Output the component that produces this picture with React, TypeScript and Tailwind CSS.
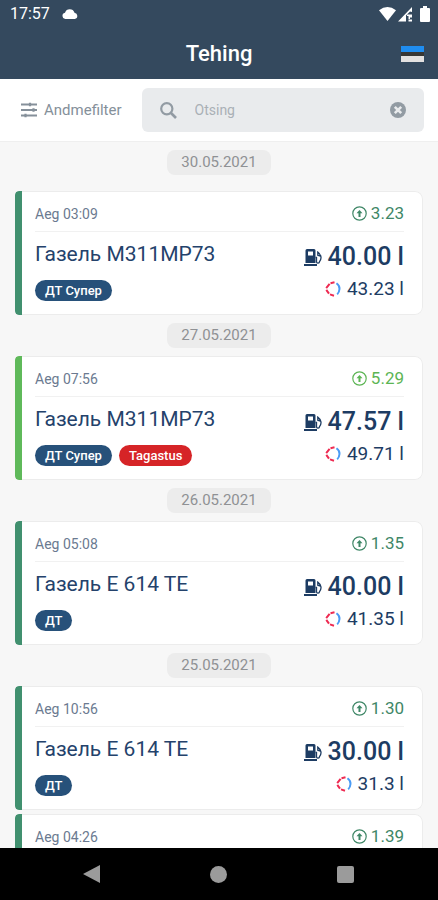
import { useState } from "react";

type Tone = "dark" | "light";

type Transaction = {
  time: string;
  price: string;
  tone: Tone;
  details?: {
    vehicle: string;
    volume: string;
    total: string;
    fuel: string;
    refund?: boolean;
  };
};

type DayGroup = {
  date: string;
  items: Transaction[];
};

const DAYS: DayGroup[] = [
  {
    date: "30.05.2021",
    items: [
      {
        time: "03:09",
        price: "3.23",
        tone: "dark",
        details: { vehicle: "Газель M311MP73", volume: "40.00", total: "43.23", fuel: "ДТ Супер" },
      },
    ],
  },
  {
    date: "27.05.2021",
    items: [
      {
        time: "07:56",
        price: "5.29",
        tone: "light",
        details: { vehicle: "Газель M311MP73", volume: "47.57", total: "49.71", fuel: "ДТ Супер", refund: true },
      },
    ],
  },
  {
    date: "26.05.2021",
    items: [
      {
        time: "05:08",
        price: "1.35",
        tone: "dark",
        details: { vehicle: "Газель E 614 TE", volume: "40.00", total: "41.35", fuel: "ДТ" },
      },
    ],
  },
  {
    date: "25.05.2021",
    items: [
      {
        time: "10:56",
        price: "1.30",
        tone: "dark",
        details: { vehicle: "Газель E 614 TE", volume: "30.00", total: "31.3", fuel: "ДТ" },
      },
      { time: "04:26", price: "1.39", tone: "dark" },
    ],
  },
];

const BAR_TONE: Record<Tone, string> = {
  dark: "bg-[#41906f]",
  light: "bg-[#5fb95a]",
};

const TEXT_TONE: Record<Tone, string> = {
  dark: "text-[#3f8767]",
  light: "text-[#5cb554]",
};

function StatusBar() {
  return (
    <div className="flex h-7 items-center justify-between pl-[10px] pr-2 text-white">
      <div className="flex items-center gap-3">
        <span className="text-base">17:57</span>
        <svg className="h-[10px] w-4" viewBox="0 0 16 10" fill="currentColor" aria-hidden="true">
          <path d="M3.2 10A3.200 3.200 0 0 1 3 3.700 5 5 0 0 1 12.500 3.700 3.200 3.200 0 0 1 12.800 10Z" />
        </svg>
      </div>
      <div className="flex items-center">
        <svg className="h-[14px] w-[17px]" viewBox="0 0 17 14" fill="currentColor" aria-hidden="true">
          <path d="M0 3.200Q8.500-3 17 3.200L8.500 14Z" />
        </svg>
        <svg className="ml-[2px] h-4 w-[15px]" viewBox="0 0 15 16" fill="currentColor" aria-hidden="true">
          <path d="M0 15.500 14 1v5l-2-.5L8 9.500v6z" />
          <path d="M9 8.500h5v3h-2v1.500h-1.500v-3H9zM10.500 13.500H14v2h-3.500z" />
        </svg>
        <svg className="ml-[7px] h-4 w-[10px]" viewBox="0 0 10 16" fill="currentColor" aria-hidden="true">
          <path d="M3 0h4v2h2a1 1 0 0 1 1 1v12a1 1 0 0 1-1 1H1a1 1 0 0 1-1-1V3a1 1 0 0 1 1-1h2z" />
        </svg>
      </div>
    </div>
  );
}

function FilterIcon() {
  return (
    <svg className="h-4 w-4" viewBox="0 0 16 16" fill="none" stroke="currentColor" aria-hidden="true">
      <path d="M0 2.500h16M0 8h16M0 13.500h16" strokeWidth="1.800" />
      <path d="M9 .8v3.400M12.500 6.300v3.400M4.500 11.800v3.400" strokeWidth="2.200" />
    </svg>
  );
}

function SearchIcon() {
  return (
    <svg className="h-[17px] w-[17px] shrink-0" viewBox="0 0 17 17" fill="none" stroke="currentColor" aria-hidden="true">
      <circle cx="6.800" cy="6.800" r="5.600" strokeWidth="2.200" />
      <path d="m11 11 5 5" strokeWidth="2.600" />
    </svg>
  );
}

function ClearIcon() {
  return (
    <svg className="h-4 w-4" viewBox="0 0 16 16" aria-hidden="true">
      <circle cx="8" cy="8" r="8" fill="currentColor" />
      <path d="m4.800 4.800 6.400 6.400M11.200 4.800l-6.400 6.400" stroke="#e9ebed" strokeWidth="2.600" />
    </svg>
  );
}

function PriceIcon() {
  return (
    <svg className="h-[15px] w-[15px]" viewBox="0 0 15 15" fill="none" stroke="currentColor" aria-hidden="true">
      <circle cx="7.500" cy="7.500" r="6.700" strokeWidth="1.200" />
      <path d="M7.500 11V6" strokeWidth="2" />
      <path d="M4.500 7.300 7.500 4l3 3.300z" fill="currentColor" stroke="none" />
    </svg>
  );
}

function PumpIcon() {
  return (
    <svg className="h-[18px] w-[18px]" viewBox="0 0 18 18" aria-hidden="true">
      <path
        fill="currentColor"
        fillRule="evenodd"
        d="M3 1h7a1.500 1.500 0 0 1 1.500 1.500V15h-10V2.500A1.500 1.500 0 0 1 3 1Zm1 2.500v4h5v-4Z"
      />
      <path d="M0 16h13v2H0z" fill="currentColor" />
      <path
        d="M11.500 9.500h1v4a1.500 1.500 0 0 0 3 .2c2.300-3 2.300-6.700-2.300-10.200M13.800 4.500v2.700l2.700 1"
        fill="none"
        stroke="currentColor"
        strokeWidth="1.300"
      />
    </svg>
  );
}

function TotalIcon() {
  return (
    <svg className="h-4 w-4" viewBox="0 0 16 16" fill="none" aria-hidden="true">
      <path d="M9.500 1.300 5.500 2.200M4.600 2.900 1.200 7.200M1.300 8.800l2.700 3.800M5 13.400l4 1.300" stroke="#ee2b52" strokeWidth="2" />
      <path d="M11.500 2.300q3.300 2.300 3 5.700t-2.300 5.400" stroke="#4a9bf5" strokeWidth="2" />
    </svg>
  );
}

function TransactionCard({ item }: { item: Transaction }) {
  const { details } = item;

  return (
    <article className="flex h-[124px] overflow-hidden rounded-l-sm rounded-r-lg">
      <div className={`w-[7px] shrink-0 rounded-l-sm ${BAR_TONE[item.tone]}`} />
      <div className="flex-1 rounded-r-lg border border-l-0 border-[#ececec] bg-white pl-[13px] pr-[18px]">
        <div className="flex h-10 items-center justify-between border-b border-[#f1f1f1] pt-1">
          <span className="text-sm text-[#6b7a90]">Aeg {item.time}</span>
          <span className={`flex items-center gap-1 text-[17px] ${TEXT_TONE[item.tone]}`}>
            <PriceIcon />
            {item.price}
          </span>
        </div>
        {details && (
          <div className="flex justify-between pt-2">
            <div>
              <h2 className="text-[21px] leading-7 text-[#24426b]">{details.vehicle}</h2>
              <div className="mt-3 flex gap-[7px] text-[13px] font-medium leading-[21px] text-white">
                <span className="rounded-full bg-[#27517a] px-[10px]">{details.fuel}</span>
                {details.refund && <span className="rounded-full bg-[#d62427] px-[10px]">Tagastus</span>}
              </div>
            </div>
            <div className="flex flex-col items-end text-[#1d3c63]">
              <p className="flex items-center gap-[6px] text-[25px] font-medium leading-[33px]">
                <PumpIcon />
                {details.volume} l
              </p>
              <p className="flex items-center gap-[6px] text-[19px] leading-8">
                <TotalIcon />
                {details.total} l
              </p>
            </div>
          </div>
        )}
      </div>
    </article>
  );
}

function NavBar() {
  return (
    <nav className="grid h-[52px] shrink-0 grid-cols-3 items-center bg-black px-[29px] text-[#9b9b9b]">
      <button type="button" aria-label="Back" className="justify-self-center">
        <svg className="h-[18px] w-[18px]" viewBox="0 0 18 18" fill="currentColor">
          <path d="M0 9 17 0v18z" />
        </svg>
      </button>
      <button type="button" aria-label="Home" className="h-[17px] w-[17px] justify-self-center rounded-full bg-current" />
      <button type="button" aria-label="Recent apps" className="h-[17px] w-[17px] justify-self-center rounded-xs bg-current" />
    </nav>
  );
}

export default function App() {
  const [query, setQuery] = useState("");

  return (
    <div className="flex h-screen flex-col overflow-hidden bg-[#f7f7f7] font-[Roboto,sans-serif]">
      <header className="shrink-0 bg-[#34495e]">
        <StatusBar />
        <div className="grid h-[51px] grid-cols-[1fr_auto_1fr] items-center px-[14px]">
          <h1 className="col-start-2 text-[22px] font-medium text-white">Tehing</h1>
          <button type="button" aria-label="Eesti" className="flex h-4 w-[23px] flex-col justify-self-end">
            <span className="h-[6px] w-full bg-[#1f8df0]" />
            <span className="h-1 w-full bg-[#383734]" />
            <span className="h-[6px] w-full bg-[#e3e1e0]" />
          </button>
        </div>
      </header>

      <div className="flex h-[63px] shrink-0 items-center gap-5 border-b border-[#efefef] bg-white pl-[21px] pr-[14px]">
        <button type="button" className="flex items-center gap-[7px] text-[15px] text-[#85909a]">
          <FilterIcon />
          Andmefilter
        </button>
        <div className="flex h-11 min-w-0 flex-1 items-center rounded-md bg-[#e9ebed] px-[18px] text-[#929ba3]">
          <SearchIcon />
          <input
            type="text"
            aria-label="Otsing"
            placeholder="Otsing"
            value={query}
            onChange={(e) => setQuery(e.target.value)}
            className="ml-[18px] min-w-0 flex-1 bg-transparent text-sm outline-none placeholder:text-[#a9b0b6]"
          />
          <button type="button" aria-label="Clear" onClick={() => setQuery("")}>
            <ClearIcon />
          </button>
        </div>
      </div>

      <main className="min-h-0 flex-1 overflow-y-auto px-[15px] [scrollbar-width:none]">
        {DAYS.map((day) => (
          <section key={day.date} className="group flex flex-col pt-2">
            <h3 className="self-center rounded-lg bg-[#ececec] px-[14px] text-[15px] leading-[25px] text-[#8f9194]">
              {day.date}
            </h3>
            <div className="mt-2 flex flex-col gap-1 group-first:mt-4">
              {day.items.map((item) => (
                <TransactionCard key={item.time} item={item} />
              ))}
            </div>
          </section>
        ))}
      </main>

      <NavBar />
    </div>
  );
}
